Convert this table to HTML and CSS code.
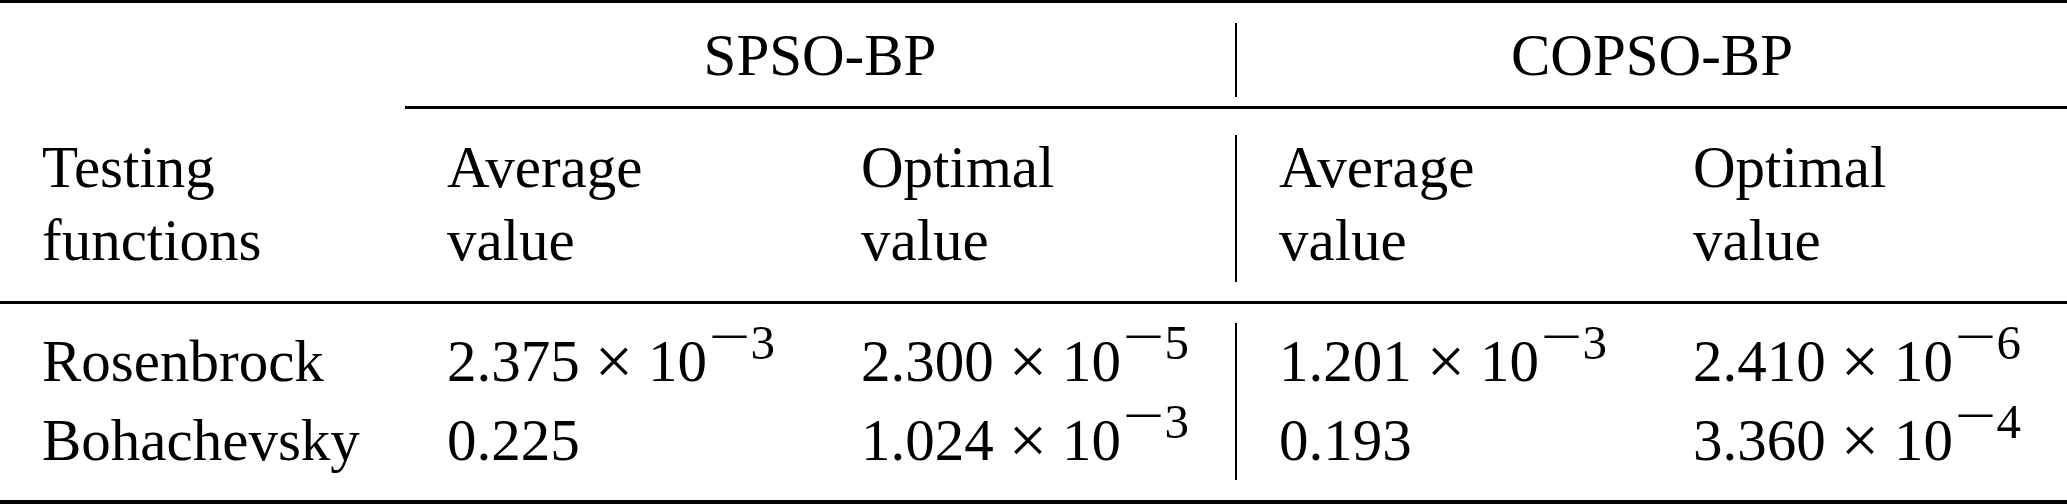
FILE: index.html
```html
<!DOCTYPE html>
<html>
<head>
    <title>SPSO-BP vs COPSO-BP</title>
    <link rel="stylesheet" href="styles.css">
</head>
<body>

<div class="tbl">
    <div class="rule"></div>

    <div class="row head-a">
        <div class="cell"></div>
        <div class="cell group">SPSO-BP</div>
        <div class="vbar"></div>
        <div class="cell group">COPSO-BP</div>
    </div>

    <div class="rule cmid"></div>

    <div class="row head-b">
        <div class="cell">Testing<br>functions</div>
        <div class="cell">Average<br>value</div>
        <div class="cell">Optimal<br>value</div>
        <div class="vbar"></div>
        <div class="cell">Average<br>value</div>
        <div class="cell">Optimal<br>value</div>
    </div>

    <div class="rule"></div>

    <div class="row body-a">
        <div class="cell">Rosenbrock</div>
        <div class="cell">2.375<span class="times">×</span>10<sup class="exp"><span class="minus">−</span>3</sup></div>
        <div class="cell">2.300<span class="times">×</span>10<sup class="exp"><span class="minus">−</span>5</sup></div>
        <div class="vbar"></div>
        <div class="cell">1.201<span class="times">×</span>10<sup class="exp"><span class="minus">−</span>3</sup></div>
        <div class="cell">2.410<span class="times">×</span>10<sup class="exp"><span class="minus">−</span>6</sup></div>
    </div>

    <div class="row body-b">
        <div class="cell">Bohachevsky</div>
        <div class="cell">0.225</div>
        <div class="cell">1.024<span class="times">×</span>10<sup class="exp"><span class="minus">−</span>3</sup></div>
        <div class="cell">0.193</div>
        <div class="cell">3.360<span class="times">×</span>10<sup class="exp"><span class="minus">−</span>4</sup></div>
    </div>

    <div class="rule"></div>
</div>

</body>
</html>
```

FILE: styles.css
```css
body { margin: 0; background: #fff; }

.tbl {
    display: grid;
    grid-template-columns: 405px 414px 416px 2px 414px 416px;
    grid-template-rows: 3px 103px 3px 192px 3px 97px 99px 4px;
    width: 2067px;
    font-family: "Liberation Serif", "Times New Roman", serif;
    font-size: 59px;
    color: #000;
}
.row { display: contents; }

/* booktabs style rules */
.rule { grid-column: 1 / -1; background: #000; }
.rule.cmid { grid-column: 2 / -1; }
.vbar { background: #000; }

.cell { padding-left: 42px; white-space: nowrap; }
.group { grid-column: span 2; padding-left: 0; text-align: center; }

.head-a .cell { line-height: 73px; padding-top: 16px; }
.head-a .vbar { margin: 20px 0 9px; }
.head-b .cell { line-height: 73px; padding-top: 22px; }
.head-b .vbar { margin: 26px 0 19px; }
.body-a .cell { line-height: 79px; padding-top: 18px; }
.body-a .vbar { grid-row: span 2; margin: 19px 0 20px; }
.body-b .cell { line-height: 79px; }

/* scientific notation */
.times { font-size: 68px; margin: 0 0.22em; vertical-align: -3px; }
.exp { font-size: 49px; line-height: 0; vertical-align: 22px; margin-left: 3px; }
.minus { display: inline-block; transform: scaleX(1.5); margin: 0 0.14em 0 0.12em; vertical-align: 6px; }
```
